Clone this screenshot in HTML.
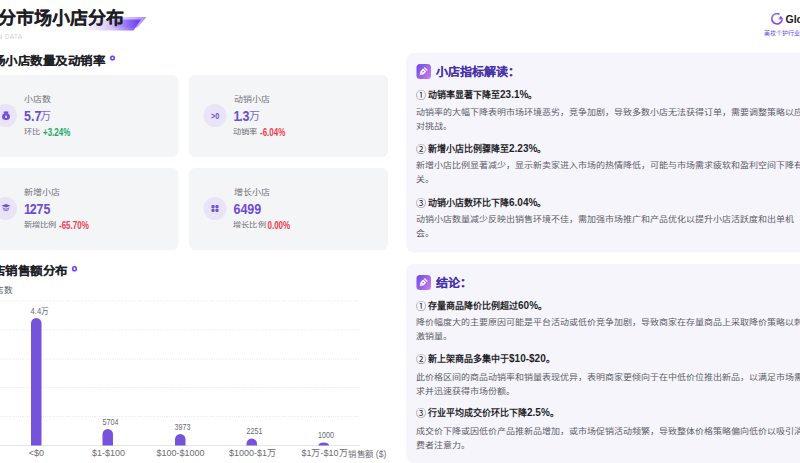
<!DOCTYPE html>
<html lang="zh-CN"><head><meta charset="utf-8">
<style>
*{margin:0;padding:0;box-sizing:border-box}
html,body{width:800px;height:463px;overflow:hidden;background:#fff}
body{position:relative;font-family:"Liberation Sans",sans-serif;color:#222}
#s{position:absolute;left:0;top:0;width:1600px;height:926px;transform:scale(0.5);transform-origin:0 0;overflow:hidden}
.abs{position:absolute;white-space:nowrap}
.cx{display:inline-block;transform-origin:0 50%}
.title{left:-40px;top:10px;font-size:36px;font-weight:700;color:#1d1d26;line-height:52px;-webkit-text-stroke:0.7px #1d1d26;transform:scaleY(.93);transform-origin:0 42px}
.sub{top:62px;font-size:16px;letter-spacing:1.2px;color:#cfcfd8;line-height:20px;transform:scaleX(.78);transform-origin:100% 50%}
.h2{font-size:25px;font-weight:700;color:#1f1f28;line-height:32px;-webkit-text-stroke:0.3px #1f1f28;transform:scaleY(.94);transform-origin:0 27px}
.dot{position:absolute;width:10.5px;height:10.5px;border-radius:50%;border:3.6px solid #6f3af5;background:#fff;box-shadow:0 0 4px rgba(120,80,245,.3)}
.card{position:absolute;width:398px;height:164px;background:#f4f5f7;border-radius:12px}
.ic{position:absolute;left:29px;top:58px;width:46px;height:46px;border-radius:50%;background:#e9e4f7}
.lbl{position:absolute;left:89px;top:36px;font-size:18px;color:#73737c;line-height:24px;transform:scaleY(.88);transform-origin:0 19px}
.val{position:absolute;left:89px;top:64px;font-size:29px;font-weight:700;color:#6e4bd6;line-height:36px}
.u{position:absolute;font-size:22px;font-weight:400;color:#7f62de;line-height:36px}
.chg{position:absolute;left:88px;top:101px;font-size:16px;color:#6f6f78;line-height:24px}
.cl{display:inline-block;transform:scaleY(.82) scaleX(1.03);transform-origin:0 19px}
.chg b{position:absolute;top:2px;font-size:20px;font-weight:700;line-height:24px}
.g{color:#1aa86a}.r{color:#f23a4f}
.panel{position:absolute;left:812px;width:840px;background:#f6f5fc;border-radius:16px}
.pic{position:absolute;left:21px;top:22px;width:29px;height:30px;border-radius:7px;background:linear-gradient(120deg,#6a4ae6,#cf7df0)}
.pt{position:absolute;left:60px;top:20px;font-size:24px;font-weight:700;color:#4630aa;line-height:34px;-webkit-text-stroke:0.2px #4630aa;transform:scaleY(.92);transform-origin:0 28px}
.lt{font-size:20px}
.ph{position:absolute;left:20px;font-size:18px;font-weight:700;color:#1f1f28;line-height:24px}
.pp{position:absolute;left:20px;width:780px;font-size:18px;color:#5c5c66;line-height:32.7px;white-space:normal;transform:scaleY(.87);transform-origin:0 0}
.grid{position:absolute;left:0;width:720px;height:2px;background:repeating-linear-gradient(90deg,#ededf1 0 2px,transparent 2px 3.6px)}
.bar{position:absolute;width:21px;background:#7553da;border-radius:10.5px 10.5px 0 0}
.bl{position:absolute;font-size:17px;color:#68686f;width:80px;line-height:20px;text-align:left}
.xl{position:absolute;font-size:18px;color:#6c6c74;text-align:center;width:120px;line-height:24px}
</style></head><body><div id="s">

<!-- header -->
<svg class="abs" style="left:140px;top:24px" width="180" height="44" viewBox="0 0 90 22">
<defs>
<linearGradient id="gd1" x1="0" x2="1" y1="0" y2="0"><stop offset="0" stop-color="#8a60f4" stop-opacity="0"/><stop offset="0.5" stop-color="#8a60f4" stop-opacity="0.35"/><stop offset="1" stop-color="#6a38f0"/></linearGradient>
<linearGradient id="gd2" x1="0" x2="1" y1="0" y2="0"><stop offset="0" stop-color="#b9a4f8" stop-opacity="0"/><stop offset="1" stop-color="#a88cf7"/></linearGradient>
</defs>
<polygon points="45,4.9 76.5,4.9 67.5,15.6 35,15.6" fill="url(#gd2)"/>
<polygon points="12,7.5 71,7.5 63.5,18.4 12,18.4" fill="url(#gd1)"/>
</svg>
<div class="abs title">细分市场小店分布</div>
<div class="abs sub" style="right:1555px">MARKET SEGMENTATION DATA</div>

<svg class="abs" style="left:1540px;top:26px" width="28" height="28" viewBox="0 0 14 14">
<defs><linearGradient id="lg" x1="0" x2="1" y1="0" y2="1"><stop offset="0" stop-color="#58d6d0"/><stop offset="0.3" stop-color="#8a3cf5"/><stop offset="1" stop-color="#9440f5"/></linearGradient>
<linearGradient id="lg2" x1="0" x2="1" y1="0.5" y2="0.5"><stop offset="0" stop-color="#5cc8dc"/><stop offset="0.55" stop-color="#8a3cf5"/></linearGradient></defs>
<path d="M8.9 0.9 A5.2 5.2 0 1 0 11.9 7.6" fill="none" stroke="url(#lg)" stroke-width="1.6" stroke-linecap="round"/>
<path d="M10.7 2.7 L13.6 6.5 L8.2 6.6 Z" fill="url(#lg2)"/>
</svg>
<div class="abs" style="left:1571px;top:23px;font-size:21px;font-weight:700;color:#1a1a1e;line-height:30px">GloDA</div>
<div class="abs" style="left:1527px;top:55px;font-size:12px;color:#6a45ea;line-height:20px">美妆个护行业洞察</div>

<!-- section 1 -->
<div class="abs h2" style="left:-90px;top:105px">细分市场小店数量及动销率</div>
<div class="dot" style="left:219.8px;top:110.6px"></div>

<div class="card" style="left:-41px;top:150px">
  <div class="ic"><svg style="position:absolute;left:15px;top:13.5px" width="18" height="18" viewBox="0 0 18 18"><path d="M3.6 1.6 Q9 -0.6 14.4 1.6 L12.6 5.4 H5.4 Z" fill="#7151d8"/><ellipse cx="9" cy="11.3" rx="7.8" ry="6.6" fill="#7151d8"/><rect x="7" y="8.8" width="4" height="5.4" rx="1.4" fill="#d9d0f5"/></svg></div>
  <div class="lbl">小店数</div>
  <div class="val"><span class="cx" style="transform:scaleX(.86)">5.7</span></div>
  <div class="u" style="left:121px;top:64px">万</div>
  <div class="chg"><span class="cl">环比</span><b class="g" style="left:39px"><span class="cx" style="transform:scaleX(.8)">+3.24%</span></b></div>
</div>
<div class="card" style="left:378px;top:150px">
  <div class="ic"><span class="abs" style="left:15px;top:13px;font-size:17px;font-weight:700;color:#7151d8;line-height:22px"><span class="cx" style="transform:scaleX(.85)">&gt;0</span></span></div>
  <div class="lbl">动销小店</div>
  <div class="val"><span class="cx" style="transform:scaleX(.86)"><span style="letter-spacing:-3px">1</span>.3</span></div>
  <div class="u" style="left:119px;top:64px">万</div>
  <div class="chg"><span class="cl">动销率</span><b class="r" style="left:54px"><span class="cx" style="transform:scaleX(.8)">-6.04%</span></b></div>
</div>
<div class="card" style="left:-41px;top:336px">
  <div class="ic"><svg style="position:absolute;left:13.5px;top:13px" width="20" height="16" viewBox="-1 0 20 16"><path d="M-0.2 4.6 L9 0.8 L18.2 4.6 L9 8.2 Z" fill="#7151d8"/><path d="M2.2 8.8 L9 11.6 L15.8 8.8" fill="none" stroke="#7151d8" stroke-width="1.7"/><path d="M3.2 12.2 L9 14.8 L14.8 12.2" fill="none" stroke="#7151d8" stroke-width="1.7"/></svg></div>
  <div class="lbl">新增小店</div>
  <div class="val"><span class="cx" style="transform:scaleX(.86)"><span style="letter-spacing:-3px">1</span>275</span></div>
  <div class="chg"><span class="cl">新增比例</span><b class="r" style="left:71px"><span class="cx" style="transform:scaleX(.8)">-65.70%</span></b></div>
</div>
<div class="card" style="left:378px;top:336px">
  <div class="ic"><svg style="position:absolute;left:14px;top:14px" width="18" height="18" viewBox="0 0 10 10"><rect x="1" y="1" width="3.6" height="3.6" rx="1.4" fill="#7151d8"/><rect x="5.4" y="1" width="3.6" height="3.6" rx="1.4" fill="#7151d8"/><rect x="1" y="5.4" width="3.6" height="3.6" rx="1.4" fill="#7151d8"/><rect x="5.4" y="5.4" width="3.6" height="3.6" rx="1.4" fill="#7151d8"/></svg></div>
  <div class="lbl">增长小店</div>
  <div class="val"><span class="cx" style="transform:scaleX(.86)">6499</span></div>
  <div class="chg"><span class="cl">增长比例</span><b class="r" style="left:69px"><span class="cx" style="transform:scaleX(.8)">0.00%</span></b></div>
</div>

<!-- section 2 -->
<div class="abs h2" style="left:-40px;top:524px">小店销售额分布</div>
<div class="dot" style="left:143.8px;top:532.3px"></div>
<div class="abs" style="left:-27px;top:568px;font-size:17px;color:#5a5a62;line-height:24px">小店数</div>

<div class="grid" style="top:601px"></div>
<div class="grid" style="top:659px"></div>
<div class="grid" style="top:717px"></div>
<div class="grid" style="top:774px"></div>
<div class="grid" style="top:832px"></div>
<div class="abs" style="left:0;top:890px;width:720px;height:2px;background:#e4e4ea"></div>

<div class="bar" style="left:62px;top:636.4px;height:254.6px"></div>
<div class="bar" style="left:205.3px;top:857.8px;height:33.2px"></div>
<div class="bar" style="left:349.7px;top:868px;height:23px"></div>
<div class="bar" style="left:493.4px;top:877.2px;height:13.8px"></div>
<div class="bar" style="left:637.2px;top:885.4px;height:5.6px;border-radius:10.5px 10.5px 0 0/5.6px 5.6px 0 0"></div>

<div class="bl" style="left:61px;top:612px"><span class="cx" style="transform:scaleX(.9)">4.4万</span></div>
<div class="bl" style="left:205px;top:834px"><span class="cx" style="transform:scaleX(.84)">5704</span></div>
<div class="bl" style="left:349px;top:844px"><span class="cx" style="transform:scaleX(.84)">3973</span></div>
<div class="bl" style="left:493px;top:853px"><span class="cx" style="transform:scaleX(.84)">2251</span></div>
<div class="bl" style="left:636px;top:861px"><span class="cx" style="transform:scaleX(.84)">1000</span></div>

<div class="xl" style="left:13px;top:894px">&lt;$0</div>
<div class="xl" style="left:157px;top:894px">$1-$100</div>
<div class="xl" style="left:301px;top:894px">$100-$1000</div>
<div class="xl" style="left:445px;top:894px">$1000-$1万</div>
<div class="xl" style="left:589px;top:894px">$1万-$10万</div>
<div class="abs" style="left:696px;top:896px;font-size:17px;color:#6c6c74;line-height:24px">销售额 ($)</div>

<!-- right panels -->
<div class="panel" style="top:106px;height:399px">
  <div class="pic"><svg width="29" height="30" viewBox="0 0 14.5 15" style="position:absolute;left:0;top:0"><g transform="translate(6.1 8.2) rotate(45) scale(0.92)"><rect x="-2.3" y="-5.6" width="4.6" height="1.3" rx="0.4" fill="#fff"/><path d="M-2.4 -3.4 H2.4 V0.6 L0 4.6 L-2.4 0.6 Z" fill="#fff"/><circle cx="0" cy="-1" r="0.85" fill="#a070ea"/><path d="M0 0 V4" stroke="#a070ea" stroke-width="0.5"/></g></svg></div>
  <div class="pt">小店指标解读：</div>
  <div class="ph" style="top:71px"><span style="font-weight:400;font-size:20px;vertical-align:-2px;margin-right:-1px">①</span> 动销率显著下降至<span class="lt">23.1%</span>。</div>
  <div class="pp" style="top:104px">动销率的大幅下降表明市场环境恶劣，竞争加剧，导致多数小店无法获得订单，需要调整策略以应对挑战。</div>
  <div class="ph" style="top:179px"><span style="font-weight:400;font-size:20px;vertical-align:-2px;margin-right:-1px">②</span> 新增小店比例骤降至<span class="lt">2.23%</span>。</div>
  <div class="pp" style="top:210px">新增小店比例显著减少，显示新卖家进入市场的热情降低，可能与市场需求疲软和盈利空间下降有关。</div>
  <div class="ph" style="top:287px"><span style="font-weight:400;font-size:20px;vertical-align:-2px;margin-right:-1px">③</span> 动销小店数环比下降<span class="lt">6.04%</span>。</div>
  <div class="pp" style="top:318px">动销小店数量减少反映出销售环境不佳，需加强市场推广和产品优化以提升小店活跃度和出单机会。</div>
</div>
<div class="panel" style="top:528px;height:398px">
  <div class="pic"><svg width="29" height="30" viewBox="0 0 14.5 15" style="position:absolute;left:0;top:0"><g transform="translate(6.1 8.2) rotate(45) scale(0.92)"><rect x="-2.3" y="-5.6" width="4.6" height="1.3" rx="0.4" fill="#fff"/><path d="M-2.4 -3.4 H2.4 V0.6 L0 4.6 L-2.4 0.6 Z" fill="#fff"/><circle cx="0" cy="-1" r="0.85" fill="#a070ea"/><path d="M0 0 V4" stroke="#a070ea" stroke-width="0.5"/></g></svg></div>
  <div class="pt">结论：</div>
  <div class="ph" style="top:70px"><span style="font-weight:400;font-size:20px;vertical-align:-2px;margin-right:-1px">①</span> 存量商品降价比例超过<span class="lt">60%</span>。</div>
  <div class="pp" style="top:102px">降价幅度大的主要原因可能是平台活动或低价竞争加剧，导致商家在存量商品上采取降价策略以刺激销量。</div>
  <div class="ph" style="top:177px"><span style="font-weight:400;font-size:20px;vertical-align:-2px;margin-right:-1px">②</span> 新上架商品多集中于<span class="lt">$10-$20</span>。</div>
  <div class="pp" style="top:212px">此价格区间的商品动销率和销量表现优异，表明商家更倾向于在中低价位推出新品，以满足市场需求并迅速获得市场份额。</div>
  <div class="ph" style="top:285px"><span style="font-weight:400;font-size:20px;vertical-align:-2px;margin-right:-1px">③</span> 行业平均成交价环比下降<span class="lt">2.5%</span>。</div>
  <div class="pp" style="top:320px">成交价下降或因低价产品推新品增加，或市场促销活动频繁，导致整体价格策略偏向低价以吸引消费者注意力。</div>
</div>

</div></body></html>
